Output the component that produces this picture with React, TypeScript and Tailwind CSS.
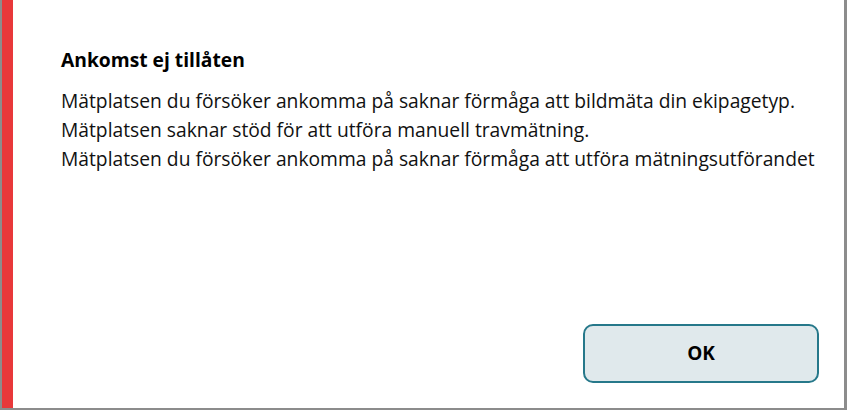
export default function App() {
  return (
    <div className="w-[847px] h-[410px] bg-[#8c8c8c] pl-[2px] pr-[3px] pb-[2px] flex" style={{ fontFamily: '"Open Sans", sans-serif' }}>
      <div className="w-[11px] bg-[#e8383a]" />
      <div className="flex-1 bg-white flex flex-col pl-[48px]">
        <h1 className="mt-[47px] text-[19.25px] font-bold text-black leading-[26px]">Ankomst ej tillåten</h1>
        <div className="mt-[14px] text-[19.25px] text-[#111] leading-[28.75px]">
          <p>Mätplatsen du försöker ankomma på saknar förmåga att bildmäta din ekipagetyp.</p>
          <p>Mätplatsen saknar stöd för att utföra manuell travmätning.</p>
          <p>Mätplatsen du försöker ankomma på saknar förmåga att utföra mätningsutförandet</p>
        </div>
        <div className="flex-1" />
        <div className="flex justify-end pr-[25px] pb-[25px]">
          <button className="w-[236px] h-[59px] rounded-[10px] border-2 border-[#26788a] bg-[#e0e9ec] text-[19px] font-bold text-black">OK</button>
        </div>
      </div>
    </div>
  );
}
